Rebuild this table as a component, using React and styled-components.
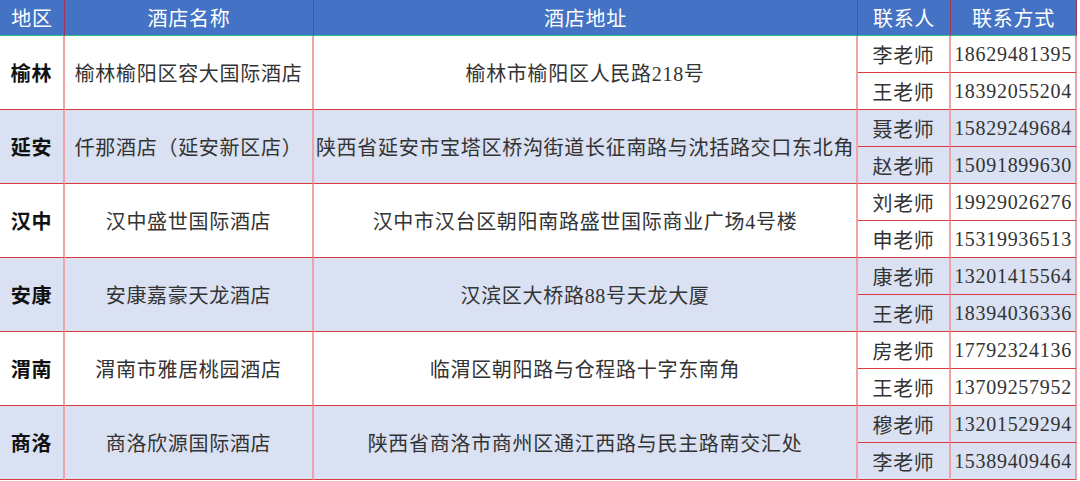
import React from "react";
import styled, { createGlobalStyle } from "styled-components";

const GlobalStyle = createGlobalStyle`
  html, body {
    margin: 0;
    padding: 0;
    background: #ffffff;
  }
  body {
    font-family: "Liberation Serif", "Noto Sans CJK SC", serif;
  }
`;

const Table = styled.div`
  display: grid;
  grid-template-columns: 65px 249px 544px 93px 126px;
  width: 1077px;
`;

const HeadCell = styled.div`
  box-sizing: border-box;
  height: 36px;
  background: #4472c4;
  color: #ffffff;
  font-size: 20px;
  letter-spacing: 0.7px;
  display: flex;
  align-items: center;
  justify-content: center;
  border-bottom: 1px solid #2fbf86;
  border-right: 1px solid #a2345a;
`;

const Cell = styled.div`
  box-sizing: border-box;
  height: ${(p) => (p.$span ? 74 : 37)}px;
  grid-row: ${(p) => (p.$span ? "span 2" : "auto")};
  background: ${(p) => (p.$shade ? "#d9e1f2" : "#ffffff")};
  color: ${(p) => (p.$bold ? "#111111" : "#333333")};
  font-weight: ${(p) => (p.$bold ? 700 : 400)};
  font-size: 20px;
  letter-spacing: 0.7px;
  white-space: nowrap;
  display: flex;
  align-items: center;
  justify-content: center;
  border-bottom: 1px solid #dc3a3f;
  border-right: 2px solid #eea3a5;
`;

const groups = [
  {
    region: "榆林",
    hotel: "榆林榆阳区容大国际酒店",
    addr: "榆林市榆阳区人民路218号",
    contacts: [
      ["李老师", "18629481395"],
      ["王老师", "18392055204"],
    ],
  },
  {
    region: "延安",
    hotel: "仟那酒店（延安新区店）",
    addr: "陕西省延安市宝塔区桥沟街道长征南路与沈括路交口东北角",
    contacts: [
      ["聂老师", "15829249684"],
      ["赵老师", "15091899630"],
    ],
  },
  {
    region: "汉中",
    hotel: "汉中盛世国际酒店",
    addr: "汉中市汉台区朝阳南路盛世国际商业广场4号楼",
    contacts: [
      ["刘老师", "19929026276"],
      ["申老师", "15319936513"],
    ],
  },
  {
    region: "安康",
    hotel: "安康嘉豪天龙酒店",
    addr: "汉滨区大桥路88号天龙大厦",
    contacts: [
      ["康老师", "13201415564"],
      ["王老师", "18394036336"],
    ],
  },
  {
    region: "渭南",
    hotel: "渭南市雅居桃园酒店",
    addr: "临渭区朝阳路与仓程路十字东南角",
    contacts: [
      ["房老师", "17792324136"],
      ["王老师", "13709257952"],
    ],
  },
  {
    region: "商洛",
    hotel: "商洛欣源国际酒店",
    addr: "陕西省商洛市商州区通江西路与民主路南交汇处",
    contacts: [
      ["穆老师", "13201529294"],
      ["李老师", "15389409464"],
    ],
  },
];

const headers = ["地区", "酒店名称", "酒店地址", "联系人", "联系方式"];

export default function App() {
  return (
    <>
      <GlobalStyle />
      <Table>
        {headers.map((h) => (
          <HeadCell key={h}>{h}</HeadCell>
        ))}
        {groups.map((g, i) => {
          const shade = i % 2 === 1;
          return (
            <React.Fragment key={g.region}>
              <Cell $span $bold $shade={shade}>{g.region}</Cell>
              <Cell $span $shade={shade}>{g.hotel}</Cell>
              <Cell $span $shade={shade}>{g.addr}</Cell>
              {g.contacts.map(([name, phone]) => (
                <React.Fragment key={name + phone}>
                  <Cell $shade={shade}>{name}</Cell>
                  <Cell $shade={shade}>{phone}</Cell>
                </React.Fragment>
              ))}
            </React.Fragment>
          );
        })}
      </Table>
    </>
  );
}
